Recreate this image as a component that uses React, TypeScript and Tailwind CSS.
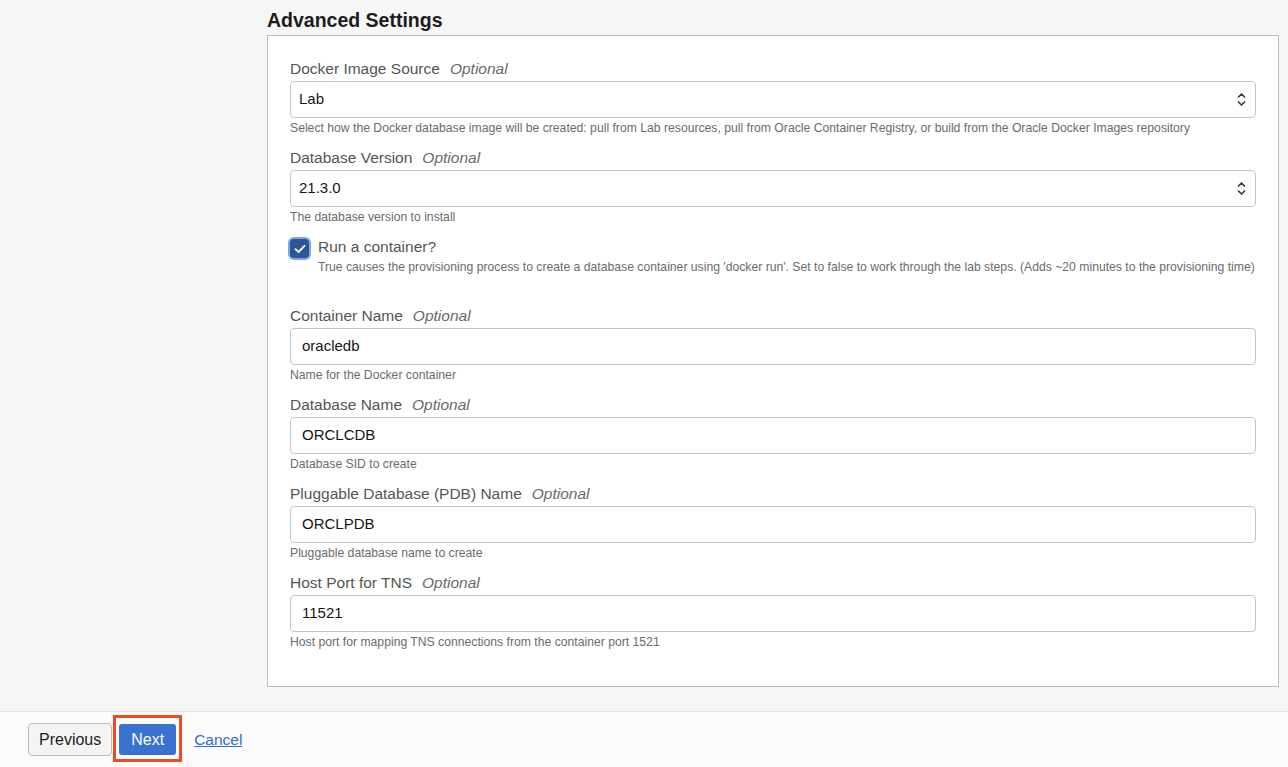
const font = { fontFamily: '"Liberation Sans", Arial, sans-serif' };

type Field = {
  label: string;
  value: string;
  help: string;
  select?: boolean;
};

const topFields: Field[] = [
  {
    label: "Docker Image Source",
    value: "Lab",
    select: true,
    help: "Select how the Docker database image will be created: pull from Lab resources, pull from Oracle Container Registry, or build from the Oracle Docker Images repository",
  },
  {
    label: "Database Version",
    value: "21.3.0",
    select: true,
    help: "The database version to install",
  },
];

const bottomFields: Field[] = [
  { label: "Container Name", value: "oracledb", help: "Name for the Docker container" },
  { label: "Database Name", value: "ORCLCDB", help: "Database SID to create" },
  { label: "Pluggable Database (PDB) Name", value: "ORCLPDB", help: "Pluggable database name to create" },
  { label: "Host Port for TNS", value: "11521", help: "Host port for mapping TNS connections from the container port 1521" },
];

function Chevrons() {
  return (
    <svg width="9" height="15" viewBox="0 0 9 15" fill="none" stroke="#3a3a3a" strokeWidth="1.7" strokeLinecap="round" strokeLinejoin="round">
      <path d="M1.5 5 4.5 2l3 3" />
      <path d="M1.5 10 4.5 13l3-3" />
    </svg>
  );
}

function FormField({ field }: { field: Field }) {
  return (
    <div className="mb-[13px]">
      <div className="h-5 flex items-center gap-[10px] text-[15.5px] leading-5">
        <span className="text-[#555555]">{field.label}</span>
        <span className="italic text-[#6a6a6a]">Optional</span>
      </div>
      <div
        className={`mt-[2px] h-[37px] flex items-center justify-between bg-white border border-[#c3c6cb] rounded-[4px] text-[15px] text-[#161513] ${
          field.select ? "pl-[8px] pr-[9px]" : "px-[11px]"
        }`}
      >
        <span>{field.value}</span>
        {field.select && <Chevrons />}
      </div>
      <p className="mt-[3px] text-[12.2px] leading-[14px] text-[#6b6b6b]">{field.help}</p>
    </div>
  );
}

export default function App() {
  return (
    <div className="h-[767px] flex flex-col bg-[#f6f6f6] overflow-hidden" style={font}>
      {/* Main */}
      <main className="flex-1 pl-[267px] pr-[9px] pt-[8px]">
        <h2 className="text-[19.5px] leading-6 font-bold text-[#1c1c1c] mb-[3px]">Advanced Settings</h2>

        <section className="bg-white border border-[#b9bcc1] px-[22px] pt-[23px] pb-[24px]">
          {topFields.map((f) => (
            <FormField key={f.label} field={f} />
          ))}

          {/* Checkbox */}
          <div className="flex gap-[9px] mt-[3px] mb-[32px]">
            <span className="mt-[2px] w-[19px] h-[19px] shrink-0 rounded-[4px] bg-[#2d5598] ring-2 ring-[#7fa6e6] flex items-center justify-center">
              <svg width="12" height="10" viewBox="0 0 12 10" fill="none" stroke="white" strokeWidth="1.8" strokeLinecap="round" strokeLinejoin="round">
                <path d="M1.5 5.2 4.5 8 10.5 1.8" />
              </svg>
            </span>
            <div>
              <div className="text-[15.5px] leading-5 text-[#555555]">Run a container?</div>
              <p className="text-[12.2px] leading-[14px] text-[#6b6b6b] mt-[3px]">
                True causes the provisioning process to create a database container using 'docker run'. Set to false to work through the lab steps. (Adds ~20 minutes to the provisioning time)
              </p>
            </div>
          </div>

          {bottomFields.map((f) => (
            <FormField key={f.label} field={f} />
          ))}
        </section>
      </main>

      {/* Footer */}
      <footer className="h-[56px] shrink-0 bg-[#fbfbfb] border-t border-[#e2e2e2] flex items-center pl-[28px] gap-[7px]">
        <button className="h-[33px] px-[10px] text-[16px] text-[#1c1c1c] bg-[#f4f4f4] border border-[#bdbdbd] rounded-[4px]">
          Previous
        </button>
        <span className="relative">
          <button className="h-[31px] px-[12px] text-[16px] text-white bg-[#3a72cf] rounded-[3px]">Next</button>
          <span className="absolute -left-[6px] -right-[6px] -top-[9px] -bottom-[7px] border-[3px] border-[#ef4a1f] pointer-events-none" />
        </span>
        <a href="#" className="ml-[11px] text-[15.5px] text-[#2f6ed0] underline">
          Cancel
        </a>
      </footer>
    </div>
  );
}
